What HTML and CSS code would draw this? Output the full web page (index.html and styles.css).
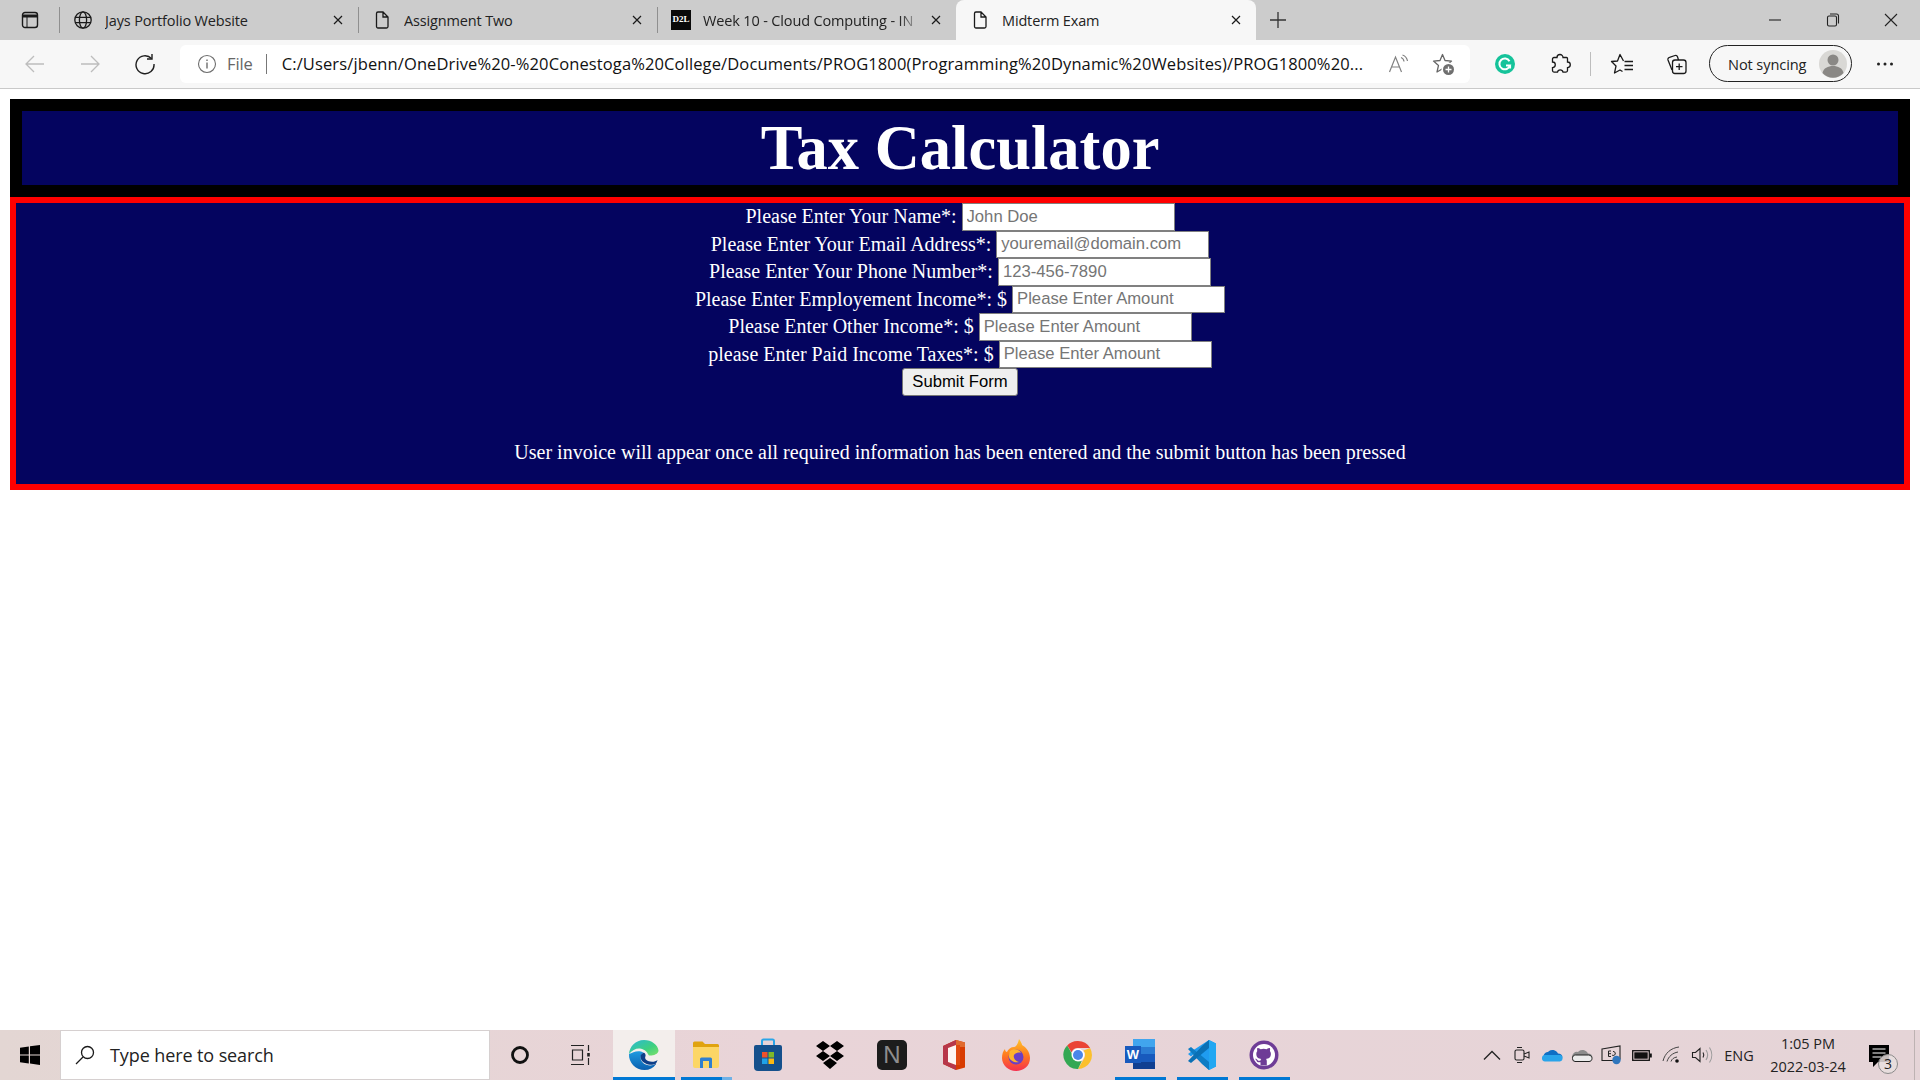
FILE: index.html
```html
<!DOCTYPE html>
<html lang="en">
<head>
<meta charset="utf-8">
<title>Midterm Exam</title>
<link rel="stylesheet" href="styles.css">
</head>
<body>
<div class="screen">
  <div class="tabbar">
    <div class="sidebtn">
      <svg width="18" height="18" viewBox="0 0 18 18" fill="none" stroke="#1a1a1a" stroke-width="1.4"><rect x="1.500" y="1.500" width="15" height="15" rx="2.500"/><path d="M1.500 5h15" stroke-width="3"/><path d="M6 6v10" stroke-width="1"/></svg>
    </div>
    <div class="tab">
      <svg class="tabicon" width="20" height="20" viewBox="0 0 20 20" fill="none" stroke="#1a1a1a" stroke-width="1.3"><circle cx="10" cy="10" r="8.2"/><ellipse cx="10" cy="10" rx="3.6" ry="8.2"/><path d="M2 7.4h16M2 12.6h16"/></svg>
      <span class="tabtext">Jays Portfolio Website</span>
      <svg class="tabclose" width="12" height="12" viewBox="0 0 12 12" stroke="#1a1a1a" stroke-width="1.2"><path d="M2 2l8 8M10 2l-8 8"/></svg>
    </div>
    <div class="tab">
      <svg class="tabicon" width="20" height="20" viewBox="0 0 20 20" fill="none" stroke="#1a1a1a" stroke-width="1.3"><path d="M4.500 3.500a1.500 1.500 0 0 1 1.500-1.500h5l5 5v9.500a1.500 1.500 0 0 1-1.500 1.500h-8.500a1.500 1.500 0 0 1-1.500-1.500zM11 2v5h5"/></svg>
      <span class="tabtext">Assignment Two</span>
      <svg class="tabclose" width="12" height="12" viewBox="0 0 12 12" stroke="#1a1a1a" stroke-width="1.2"><path d="M2 2l8 8M10 2l-8 8"/></svg>
    </div>
    <div class="tab tab-d2l">
      <span class="d2l">D2L</span>
      <span class="tabtext tabfade">Week 10 - Cloud Computing - IN</span>
      <svg class="tabclose" width="12" height="12" viewBox="0 0 12 12" stroke="#1a1a1a" stroke-width="1.2"><path d="M2 2l8 8M10 2l-8 8"/></svg>
    </div>
    <div class="tab tab-active">
      <svg class="tabicon" width="20" height="20" viewBox="0 0 20 20" fill="none" stroke="#1a1a1a" stroke-width="1.3"><path d="M4.500 3.500a1.500 1.500 0 0 1 1.500-1.500h5l5 5v9.500a1.500 1.500 0 0 1-1.500 1.500h-8.500a1.500 1.500 0 0 1-1.500-1.500zM11 2v5h5"/></svg>
      <span class="tabtext">Midterm Exam</span>
      <svg class="tabclose" width="12" height="12" viewBox="0 0 12 12" stroke="#1a1a1a" stroke-width="1.2"><path d="M2 2l8 8M10 2l-8 8"/></svg>
    </div>
    <div class="newtab">
      <svg width="18" height="18" viewBox="0 0 18 18" stroke="#333" stroke-width="1.3"><path d="M9 1v16M1 9h16"/></svg>
    </div>
    <div class="winctl">
      <div class="winbtn"><svg width="14" height="14" viewBox="0 0 14 14" stroke="#222" stroke-width="1.1"><path d="M1 7h12"/></svg></div>
      <div class="winbtn"><svg width="14" height="14" viewBox="0 0 14 14" fill="none" stroke="#222" stroke-width="1.1"><rect x="1.500" y="3" width="9" height="10" rx="1.500"/><path d="M4 1h6.500a2 2 0 0 1 2 2v7.500"/></svg></div>
      <div class="winbtn"><svg width="14" height="14" viewBox="0 0 14 14" stroke="#222" stroke-width="1.1"><path d="M1 1l12 12M13 1L1 13"/></svg></div>
    </div>
  </div>

  <div class="toolbar">
    <div class="tool"><svg width="20" height="20" viewBox="0 0 20 20" fill="none" stroke="#bdbdbd" stroke-width="1.300"><path d="M19 10H1M9 2l-8 8 8 8"/></svg></div>
    <div class="tool"><svg width="20" height="20" viewBox="0 0 20 20" fill="none" stroke="#bdbdbd" stroke-width="1.300"><path d="M1 10h18M11 2l8 8-8 8"/></svg></div>
    <div class="tool"><svg width="22" height="22" viewBox="0 0 22 22" fill="none" stroke="#1f1f1f" stroke-width="1.400"><path d="M17.500 5.500A9 9 0 1 0 20 11"/><path d="M18 1v5h-5"/></svg></div>
    <div class="address">
      <svg class="addr-info" width="20" height="20" viewBox="0 0 20 20" fill="none" stroke="#6e6e6e" stroke-width="1.100"><circle cx="10" cy="10" r="8.500"/><path d="M10 8.500v6M10 5.500v1.500" stroke-width="1.400"/></svg>
      <span class="addr-file">File</span>
      <span class="addr-sep"></span>
      <span class="addr-url">C:/Users/jbenn/OneDrive%20-%20Conestoga%20College/Documents/PROG1800(Programming%20Dynamic%20Websites)/PROG1800%20...</span>
      <svg class="addr-read" width="22" height="20" viewBox="0 0 22 20" fill="none" stroke="#808080" stroke-width="1.200"><path d="M1.500 18L7.500 3l6 15M4 13h7"/><path d="M13 3.500c1.800.6 2.800 2 3 4M14.500 1c2.800 1 4.500 3.200 5 6"/></svg>
      <svg class="addr-star" width="24" height="24" viewBox="0 0 24 24"><path d="M10.500 2.500L13 8.500l6.500.6-5 4.300 1.500 6.600-5.500-3.300L5 20l1.500-6.600-5-4.300L8 8.500z" fill="none" stroke="#666" stroke-width="1.300" stroke-linejoin="round"/><circle cx="16.500" cy="17.500" r="7" fill="#fff"/><circle cx="16.500" cy="17.500" r="5.500" fill="#6f6f6f"/><path d="M16.500 14.500v6M13.500 17.500h6" stroke="#fff" stroke-width="1.300"/></svg>
    </div>
    <div class="tool tool-first">
      <svg width="22" height="22" viewBox="0 0 22 22"><circle cx="11" cy="11" r="10" fill="#15c39a"/><path d="M15.500 8.200A5.400 5.400 0 1 0 16 12.500h-4" fill="none" stroke="#fff" stroke-width="2"/><path d="M16.200 12.500v3" stroke="#fff" stroke-width="1.800"/></svg>
    </div>
    <div class="tool"><svg width="22" height="22" viewBox="0 0 22 22" fill="none" stroke="#1a1a1a" stroke-width="1.300"><path d="M8 4.500a3 3 0 0 1 6 0h3.500a1 1 0 0 1 1 1V9a2.800 2.800 0 0 1 0 5.600v3a1.500 1.500 0 0 1-1.500 1.500h-3a2.800 2.800 0 0 0-5.500 0H5a1.500 1.500 0 0 1-1.500-1.500v-3a2.800 2.800 0 0 0 0-5.600V6a1.500 1.500 0 0 1 1.500-1.500z"/></svg></div>
    <span class="toolsep"></span>
    <div class="tool"><svg width="24" height="22" viewBox="0 0 24 22" fill="none" stroke="#1a1a1a" stroke-width="1.300" stroke-linejoin="round"><path d="M13.500 8L10 1.500 7.500 8 1.500 8.500 6 13l-1.500 7L10 17l2.500 1.500"/><path d="M14.500 8.500h8.500M14.500 12.500h8.500M14.500 16.500h8.500"/></svg></div>
    <div class="tool"><svg width="24" height="24" viewBox="0 0 24 24" fill="none" stroke="#1a1a1a" stroke-width="1.300"><rect x="7.500" y="8" width="13.500" height="13.500" rx="2.500"/><path d="M14.200 11.500v6.500M11 14.700h6.500"/><path d="M7 18L3 8a2 2 0 0 1 1.500-2.600L10 3.500a2 2 0 0 1 2.500 1.200L13.500 8"/></svg></div>
    <div class="pill">
      <span class="pill-text">Not syncing</span>
      <span class="avatar"><svg width="28" height="28" viewBox="0 0 28 28"><circle cx="14" cy="14" r="14" fill="#d9d8d5"/><circle cx="14" cy="10" r="5.500" fill="#8a8885"/><path d="M3.500 23c1-5 5.500-7 10.500-7s9.500 2 10.500 7a14 14 0 0 1-21 0z" fill="#8a8885"/></svg></span>
    </div>
    <div class="tool tool-more"><svg width="18" height="4" viewBox="0 0 18 4" fill="#222"><circle cx="2.500" cy="2" r="1.500"/><circle cx="9" cy="2" r="1.500"/><circle cx="15.500" cy="2" r="1.500"/></svg></div>
  </div>

  <main class="page">
    <header class="banner"><h1 class="title">Tax Calculator</h1></header>
    <section class="panel">
      <form class="form">
        <div class="row"><label>Please Enter Your Name*:</label> <input type="text" placeholder="John Doe"></div>
        <div class="row"><label>Please Enter Your Email Address*:</label> <input type="text" placeholder="youremail@domain.com"></div>
        <div class="row"><label>Please Enter Your Phone Number*:</label> <input type="text" placeholder="123-456-7890"></div>
        <div class="row"><label>Please Enter Employement Income*: $</label> <input type="text" placeholder="Please Enter Amount"></div>
        <div class="row"><label>Please Enter Other Income*: $</label> <input type="text" placeholder="Please Enter Amount"></div>
        <div class="row"><label>please Enter Paid Income Taxes*: $</label> <input type="text" placeholder="Please Enter Amount"></div>
        <div class="row row-btn"><button type="button">Submit Form</button></div>
      </form>
      <p class="message">User invoice will appear once all required information has been entered and the submit button has been pressed</p>
    </section>
  </main>

  <footer class="taskbar">
    <div class="start"><svg width="20" height="20" viewBox="0 0 20 20" fill="#000"><path d="M0 2.800L8.800 1.500v8H0zM10 1.300L20 0v9.500H10zM0 10.600h8.800v8L0 17.300zM10 10.600h10V20l-10-1.400z"/></svg></div>
    <div class="search">
      <svg width="20" height="20" viewBox="0 0 20 20" fill="none" stroke="#1a1a1a" stroke-width="1.300"><circle cx="12.500" cy="7.500" r="6"/><path d="M8 12l-7 7"/></svg>
      <span class="search-text">Type here to search</span>
    </div>
    <div class="tbslot tb-wide"><svg width="20" height="20" viewBox="0 0 20 20" fill="none" stroke="#111" stroke-width="2.800"><circle cx="10" cy="10" r="7.500"/></svg></div>
    <div class="tbslot tb-wide"><svg width="22" height="22" viewBox="0 0 22 22" fill="none" stroke="#222" stroke-width="1.200"><path d="M1 1.500h13M1 20.500h13M2.500 6h10v10h-10zM18.500 1v6M18.500 14v7"/><rect x="17.200" y="9" width="2.600" height="3.500" fill="#222" stroke="none"/></svg></div>
    <div class="pins">
      <div class="pin pin-active run">
        <svg width="32" height="32" viewBox="0 0 32 32"><defs><linearGradient id="eg1" x1="0" y1="0" x2="1" y2="1"><stop offset="0" stop-color="#2bb8d8"/><stop offset=".6" stop-color="#3ed07f"/><stop offset="1" stop-color="#7fe06a"/></linearGradient><linearGradient id="eg2" x1="0" y1="0" x2="0" y2="1"><stop offset="0" stop-color="#1f9be0"/><stop offset="1" stop-color="#0a5fb0"/></linearGradient></defs><path d="M16 1C7.500 1 1.500 7.500 1 15c3-4 7.500-6 11-5.500 6 .8 7.500 5 9 7 3 .5 9.500-1 9.500-5C30 6 23.500 1 16 1z" fill="url(#eg1)"/><path d="M1 15c-.5 8.500 6.500 16 15.500 16 5 0 9-2 11.500-6-3 1.500-6.500 1.800-9.500.8-4-1.400-6.300-4.500-5.800-8 .3-2 1.300-3 2.800-4-5-3.500-10.500-.5-14.500 1.200z" fill="url(#eg2)"/><path d="M15.500 13.800c-2.500 1-3.500 3.300-2.800 5.800 1 3 4.500 5.800 9.300 6.100 2.300.1 4.500-.4 6-.7-1 1-2 2-4 3 2-1 5-4 5.500-7-2 1.800-6 2.500-9.500 1-2.500-1-3.500-3-2.500-5 .5-1 -.8-3.500-2-3.200z" fill="#0d3e88"/></svg>
      </div>
      <div class="pin run run-split">
        <svg width="32" height="32" viewBox="0 0 32 32"><path d="M3 4a1.500 1.500 0 0 1 1.500-1.500h8L15 5h12.500A1.500 1.500 0 0 1 29 6.500V10H3z" fill="#e0a30f"/><path d="M3 8h26v19a2 2 0 0 1-2 2H5a2 2 0 0 1-2-2z" fill="#fcd666"/><path d="M10 29V20a1.500 1.500 0 0 1 1.500-1.500h9A1.500 1.500 0 0 1 22 20v9h-3v-7h-6v7z" fill="#2f7fd0"/></svg>
      </div>
      <div class="pin">
        <svg width="30" height="34" viewBox="0 0 30 34"><path d="M9 8V3a1.500 1.500 0 0 1 1.500-1.500h9A1.500 1.500 0 0 1 21 3v5" fill="none" stroke="#2aa5e8" stroke-width="2"/><path d="M1 9a2 2 0 0 1 2-2h24a2 2 0 0 1 2 2v20a4 4 0 0 1-4 4H5a4 4 0 0 1-4-4z" fill="#15508c"/><rect x="9" y="14" width="5.500" height="5.500" fill="#f0512a"/><rect x="15.500" y="14" width="5.500" height="5.500" fill="#7eb829"/><rect x="9" y="20.500" width="5.500" height="5.500" fill="#1fa2e8"/><rect x="15.500" y="20.500" width="5.500" height="5.500" fill="#fbb812"/></svg>
      </div>
      <div class="pin">
        <svg width="30" height="30" viewBox="0 0 30 30" fill="#000"><path d="M8 1l7 5-7 5-7-5zM22 1l7 5-7 5-7-5zM8 11l7 5-7 5-7-5zM22 11l7 5-7 5-7-5zM15 18l7 5-7 6-7-6z"/></svg>
      </div>
      <div class="pin">
        <span class="notion">N</span>
      </div>
      <div class="pin">
        <svg width="24" height="32" viewBox="0 0 24 32"><path d="M1 7L14 1l9 2.500v25L14 31 1 25z" fill="#d83b01"/><path d="M1 7l13-6v5L6 9v14l8 3v5L1 25z" fill="#b7374a"/><path d="M14 1l9 2.500V8H14z" fill="#e06a2e"/><path d="M6 9l8-3v20l-8-3z" fill="#fff" opacity=".95"/><path d="M14 6h4v20h-4z" fill="#e0490f"/></svg>
      </div>
      <div class="pin">
        <svg width="30" height="34" viewBox="0 0 30 34"><defs><linearGradient id="ff1" x1="0" y1="0" x2="0" y2="1"><stop offset="0" stop-color="#ffc62b"/><stop offset=".5" stop-color="#ff7a1f"/><stop offset="1" stop-color="#f5304f"/></linearGradient></defs><path d="M18 1c2 3 3 5 3 6 4 2 8 7 8 13 0 8-6.500 13-14 13S1 27 1 20c0-4 1-7 3-9 0 2 1 3 2 3 1-3 4-5 7-5 2 0 4-3 5-8z" fill="url(#ff1)"/><circle cx="15" cy="19" r="7.500" fill="#6b3fc4"/><path d="M9 13c4-3 9-2 11 2-3-1-6 0-7 2-1 3 1 6 5 7-4 1-9-1-10-5 0-2 0-4 1-6z" fill="#ffb32a"/></svg>
      </div>
      <div class="pin">
        <svg width="30" height="30" viewBox="0 0 30 30"><path d="M15 1a14 14 0 0 1 12.100 7H15a7 7 0 0 0-6.500 4.300L4.200 5.500A14 14 0 0 1 15 1z" fill="#ea4335"/><path d="M27.100 8A14 14 0 0 1 15 29l6.100-10.500A7 7 0 0 0 22 15a7 7 0 0 0-1.500-4.500z" fill="#fbc02d"/><path d="M15 29A14 14 0 0 1 4.200 5.500l6 10.500a7 7 0 0 0 8.500 5z" fill="#34a853"/><circle cx="15" cy="15" r="6.500" fill="#fff"/><circle cx="15" cy="15" r="5" fill="#4a86e8"/></svg>
      </div>
      <div class="pin run">
        <div class="word">
          <span class="word-sheet"><i class="w1"></i><i class="w2"></i><i class="w3"></i><i class="w4"></i></span>
          <span class="word-w">W</span>
        </div>
      </div>
      <div class="pin run">
        <svg width="30" height="32" viewBox="0 0 30 32"><path d="M22 1l7 3.500v23L22 31 9 18.500z" fill="#1f9cf0"/><path d="M22 1L4 17.500 1 15l4-3 17-11zM22 1v8L13 16 9 13z" fill="#1f9cf0"/><path d="M1 10l3-2 18 15v8l-7-6z" fill="#0d7cc4"/><path d="M1 22l3 2 18-15V1l-7 6z" fill="#0a70b5"/><path d="M22 1l7 3.500v23L22 31z" fill="#22a7f2"/></svg>
      </div>
      <div class="pin run">
        <svg width="30" height="30" viewBox="0 0 30 30"><circle cx="15" cy="15" r="14.500" fill="#6e3c96"/><circle cx="15" cy="15" r="11" fill="#fff"/><path d="M11.500 25.500v-3.300c-3 .6-3.800-1-4.200-2 -.3-.6-.8-1-1.200-1.300 .8-.5 1.800 .3 2.400 1.100 .7 1 1.800 1 3 .5 .1-.7 .4-1.200 .8-1.500-2.700-.4-5-1.500-5-5.300 0-1.100 .4-2 1-2.800-.1-.3-.5-1.400 .1-2.800 0 0 1-.3 3.200 1.200a10 10 0 0 1 6 0c2.200-1.500 3.200-1.200 3.200-1.200 .6 1.400 .2 2.500 .1 2.800 .6 .8 1 1.700 1 2.800 0 3.800-2.300 4.900-5 5.300 .5 .4 .9 1.100 .9 2.200v4.300z" fill="#6e3c96"/></svg>
      </div>
    </div>
    <div class="tray">
      <div class="trayslot"><svg width="18" height="10" viewBox="0 0 18 10" fill="none" stroke="#222" stroke-width="1.300"><path d="M1 9.500l8-8 8 8"/></svg></div>
      <div class="trayslot"><svg width="16" height="18" viewBox="0 0 16 18" fill="none" stroke="#222" stroke-width="1.100"><rect x="1" y="4" width="9" height="10" rx="1.500"/><path d="M10 8l5-2v6l-5-2M3 1.500h5M3 16.500h5"/></svg></div>
      <div class="trayslot"><svg width="22" height="14" viewBox="0 0 22 14"><path d="M7 4a6 6 0 0 1 10 1.500c2.500 0 4.500 1.500 4.500 4H3a4 4 0 0 1 4-5.500z" fill="#0f6fc4"/><path d="M1 10a3 3 0 0 1 3-3h15c2 0 2.500 2 2.500 3a3 3 0 0 1-2.500 3.500H4A3 3 0 0 1 1 10z" fill="#29a4ea"/></svg></div>
      <div class="trayslot"><svg width="22" height="14" viewBox="0 0 22 14"><path d="M7 4a6 6 0 0 1 10 1.500c2.500 0 4.500 1.500 4.500 4H1a5 5 0 0 1 6-5.500z" fill="#8c8c8c"/><path d="M1.500 10.500A3 3 0 0 1 4.500 7h13c2.500 0 3.500 2 3.500 3.500 0 2-1.500 3-3 3H4a2.800 2.800 0 0 1-2.500-3z" fill="#ececec" stroke="#222" stroke-width="1"/></svg></div>
      <div class="trayslot"><svg width="22" height="20" viewBox="0 0 22 20"><path d="M1 4l18-3v13l-7 1.500H1z" fill="none" stroke="#222" stroke-width="1.100"/><path d="M10 6H7.500v5.500H10M7.500 8.700H10M12 6.500a2 2 0 1 1-1 3.500" fill="none" stroke="#222" stroke-width="1"/><circle cx="15.500" cy="15" r="4.200" fill="#2f76bd"/></svg></div>
      <div class="trayslot"><svg width="20" height="11" viewBox="0 0 20 11"><rect x=".7" y=".7" width="16.600" height="9.600" fill="none" stroke="#111" stroke-width="1.300"/><rect x="2.300" y="2.300" width="13.400" height="6.400" fill="#111"/><rect x="18" y="3.500" width="1.800" height="4" fill="#111"/></svg></div>
      <div class="trayslot"><svg width="20" height="18" viewBox="0 0 20 18" fill="none" stroke="#444" stroke-width="1"><path d="M1 15C3 7 9 2 17 1M5 15.500C6.500 10.500 10.500 7 16 6M9 15.500c.8-2.500 2.800-4 6-4.500"/><circle cx="15" cy="15" r="1.800" fill="#111" stroke="none"/></svg></div>
      <div class="trayslot"><svg width="22" height="18" viewBox="0 0 22 18" fill="none" stroke="#222" stroke-width="1.100"><path d="M1.500 6.500h3L9 2.500v13l-4.500-4h-3z"/><path d="M12 6.500c1 1.500 1 3.500 0 5" /><path d="M15 4c2 3 2 7 0 10M18.500 1.500c3 4.500 3 10.500 0 15" stroke="#9a9a9a"/></svg></div>
      <div class="tray-lang">ENG</div>
      <div class="clock"><span>1:05 PM</span><span>2022-03-24</span></div>
      <div class="notif">
        <svg width="20" height="23" viewBox="0 0 20 23"><path d="M0 0h20v17H9l-5 5v-5H0z" fill="#000"/><path d="M3.500 4h13M3.500 8h13M3.500 12h9" stroke="#fff" stroke-width="1"/></svg>
        <span class="badge">3</span>
      </div>
      <span class="traybar"></span>
    </div>
  </footer>
</div>
</body>
</html>
```

FILE: styles.css
```css
* { box-sizing: border-box; }
html, body { margin: 0; padding: 0; height: 100%; }
body { background: #fff; overflow: hidden; font-family: "Open Sans", "Noto Sans", sans-serif; }
.screen { width: 1920px; height: 1080px; display: flex; flex-direction: column; }

/* Tab strip */
.tabbar { height: 40px; background: #cccccc; display: flex; align-items: stretch; flex: none; }
.sidebtn { width: 59px; display: flex; align-items: center; justify-content: center; }
.tab { width: 299px; display: flex; align-items: center; padding-left: 13px; padding-right: 14px; position: relative; border-left: 1px solid transparent; font-size: 14.500px; color: #222; }
.tab::before { content: ""; position: absolute; left: -1px; top: 7px; bottom: 7px; width: 1px; background: #8f8f8f; }
.tab-active { width: 300px; background: #f7f7f7; border-radius: 8px 8px 0 0; }
.tab-active::before { display: none; }
.tabicon { flex: none; }
.tabtext { margin-left: 12px; white-space: nowrap; letter-spacing: -0.15px; overflow: hidden; }
.tabfade { width: 218px; -webkit-mask-image: linear-gradient(to right, #000 90%, transparent 100%); mask-image: linear-gradient(to right, #000 90%, transparent 100%); }
.tabclose { margin-left: auto; flex: none; }
.d2l { width: 20px; height: 20px; background: #0a0a0a; color: #fff; font: bold 9px/19px "Liberation Serif", serif; text-align: center; flex: none; }
.newtab { width: 44px; display: flex; align-items: center; justify-content: center; }
.winctl { margin-left: auto; display: flex; }
.winbtn { width: 58px; display: flex; align-items: center; justify-content: center; }

/* Toolbar */
.toolbar { height: 49px; background: #f7f7f7; border-bottom: 1px solid #c9c9c9; display: flex; align-items: center; padding-left: 7px; flex: none; padding-bottom: 1px; }
.tool { width: 55px; height: 38px; display: flex; align-items: center; justify-content: center; flex: none; }
.tool-first { margin-left: 7px; }
.tool-more { margin-left: 5px; }
.toolsep { width: 1px; height: 24px; background: #bdbdbd; margin: 0 3px; flex: none; }
.address { width: 1290px; height: 38px; margin-left: 8px; background: #fff; border-radius: 6px; display: flex; align-items: center; padding-left: 17px; flex: none; }
.addr-info { flex: none; }
.addr-file { font-size: 16.500px; color: #666; margin-left: 10px; letter-spacing: -0.1px; }
.addr-sep { width: 1px; height: 20px; background: #777; margin-left: 13px; flex: none; }
.addr-url { font-size: 16.500px; color: #111; margin-left: 15px; white-space: nowrap; width: 1082px; flex: none; letter-spacing: 0.12px; }
.addr-read { margin-left: 24px; flex: none; }
.addr-star { margin-left: 22px; flex: none; }
.pill { width: 143px; height: 37px; margin-left: 5px; border: 1.500px solid #222; border-radius: 19px; display: flex; align-items: center; padding-left: 18px; flex: none; }
.pill-text { font-size: 14.600px; color: #222; white-space: nowrap; letter-spacing: -0.1px; }
.avatar { margin-left: auto; margin-right: 4px; display: flex; }

/* Page */
.page { flex: 1; padding: 10px 10px 0; background: #fff; min-height: 0; }
.banner { border: 12px solid #000; background: #04045f; }
.title { margin: 0; font: bold 62.500px/74px "Liberation Serif", serif; color: #fff; text-align: center; }
.panel { border: 6px solid #f00; background: #04045f; color: #fff; font: 20px/23px "Liberation Serif", serif; text-align: center; }
.form { margin: 0; }
.row { height: 27.500px; display: flex; align-items: center; justify-content: center; gap: 5px; }
.row input { width: 213px; height: 27.500px; padding: 1px 4px; border: 1px solid #808080; background: #fff; font: 16.670px "Liberation Sans", sans-serif; margin: 0; border-radius: 0; outline: none; }
.row input::placeholder { color: #757575; opacity: 1; }
.row-btn { height: 28px; }
.row-btn button { width: 116px; height: 28px; padding: 0; background: #efefef; border: 1px solid #767676; border-radius: 3px; font: 16.670px "Liberation Sans", sans-serif; color: #000; }
.message { margin: 45px 0 20px; }

/* Taskbar */
.taskbar { height: 50px; flex: none; display: flex; align-items: stretch; background: linear-gradient(to right, #e3d6d3, #e9d4d8 40%, #e5d4d7); }
.start { width: 60px; display: flex; align-items: center; justify-content: center; }
.search { width: 430px; background: #fff; border: 1px solid #d6d0d0; display: flex; align-items: center; padding-left: 14px; }
.search-text { margin-left: 15px; font-size: 18px; color: #222; letter-spacing: -0.1px; }
.tbslot { width: 60px; display: flex; align-items: center; justify-content: center; }
.tb-wide + .tb-wide { width: 61px; }
.pins { display: flex; margin-left: 2px; }
.pin { width: 62px; display: flex; align-items: center; justify-content: center; position: relative; }
.pin-active { background: #f3eeec; }
.run::after { content: ""; position: absolute; left: 6px; right: 5px; bottom: 0; height: 3px; background: #0078d4; }
.pin-active.run::after { left: 0; right: 0; }
.run-split::after { right: 5px; background: linear-gradient(to right, #0078d4 80%, #6fb1e6 80%); }
.notion { width: 30px; height: 30px; border-radius: 5px; background: #1c1c1c; color: #8d8d8d; font: 24px/30px "Liberation Sans", sans-serif; text-align: center; }
.word { width: 30px; height: 32px; display: flex; position: relative; }
.word-sheet { width: 22px; height: 30px; margin-left: 8px; display: flex; flex-direction: column; }
.word-sheet i { flex: 1; display: block; }
.w1 { background: #41a5ee; }
.w2 { background: #2b7cd3; }
.w3 { background: #185abd; }
.w4 { background: #103f91; }
.word-w { position: absolute; left: 0; top: 7px; width: 16px; height: 17px; background: #185abd; color: #fff; font: bold 13px/17px "Liberation Sans", sans-serif; text-align: center; }
.tray { width: 443px; margin-left: auto; display: flex; align-items: stretch; }
.trayslot { width: 30px; display: flex; align-items: center; justify-content: center; }
.tray-lang { width: 44px; display: flex; align-items: center; justify-content: center; font-size: 14.500px; color: #222; }
.clock { width: 94px; display: flex; flex-direction: column; align-items: center; justify-content: center; gap: 4px; font-size: 14.500px; line-height: 19px; color: #222; }
.notif { width: 50px; display: flex; align-items: flex-start; padding: 15px 0 0 14px; position: relative; }
.badge { position: absolute; left: 23px; top: 24px; width: 20px; height: 20px; border-radius: 50%; background: rgba(232, 222, 222, 0.85); border: 1px solid #8a8a8a; font-size: 14px; line-height: 18px; text-align: center; color: #222; }
.traybar { width: 1px; margin-left: 9px; background: #bdb2b2; }
```
